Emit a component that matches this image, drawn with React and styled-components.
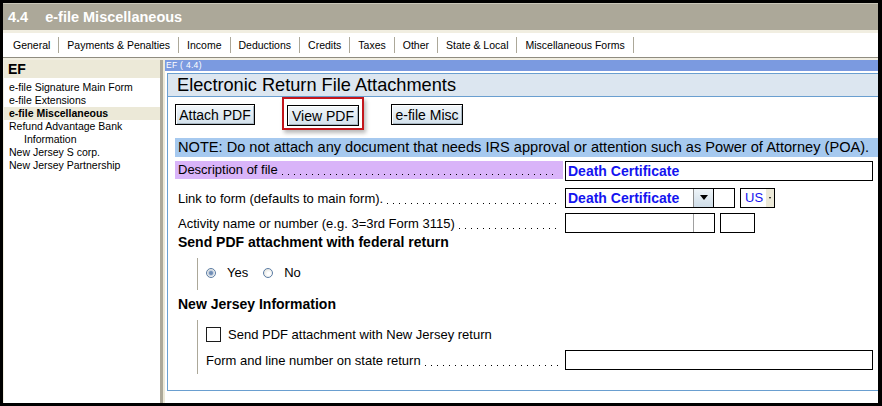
import React from 'react'
import styled, { createGlobalStyle } from 'styled-components'

const GlobalStyle = createGlobalStyle`
  html, body {
    margin: 0;
    padding: 0;
    background: #000;
  }
  body {
    font-family: "Liberation Sans", Arial, sans-serif;
    color: #000;
  }
  * {
    box-sizing: border-box;
  }
`

const Frame = styled.div`
  width: 882px;
  height: 406px;
  background: #000;
  padding: 3px 4px 3px 3px;
  display: flex;
  flex-direction: column;
`

const Window = styled.div`
  flex: 1;
  display: flex;
  flex-direction: column;
  background: #fff;
  overflow: hidden;
`

const TitleBar = styled.div`
  height: 27px;
  flex: none;
  background: #aca899;
  border-top: 1px solid #c9c6b8;
  color: #fff;
  font-weight: bold;
  font-size: 14.5px;
  display: flex;
  align-items: center;
  padding-left: 5px;
  gap: 17px;
`

const TabStrip = styled.div`
  flex: none;
  height: 28px;
  border-top: 3px solid #f1eee1;
  border-bottom: 1px solid #8f8c80;
  display: flex;
  align-items: center;
  padding: 0 0 1px 2px;
`

const Tab = styled.div`
  height: 16px;
  padding: 0 8px;
  border-right: 1px solid #aca899;
  font-size: 10.5px;
  display: flex;
  align-items: center;
  white-space: nowrap;
`

const Body = styled.div`
  flex: 1;
  display: flex;
  border-top: 2px solid #f1eee1;
  min-height: 0;
`

const Sidebar = styled.div`
  width: 160px;
  flex: none;
  background: #fff;
  border-left: 1px solid #f1eee1;
  border-right: 3px solid #aca899;
`

const SideHeader = styled.div`
  height: 18px;
  background: #ece9d8;
  font-weight: bold;
  font-size: 14px;
  padding-left: 4px;
  display: flex;
  align-items: center;
`

const SideList = styled.ul`
  list-style: none;
  margin: 0;
  padding: 3px 0 0;
`

const SideItem = styled.li`
  height: 13px;
  line-height: 13px;
  font-size: 10.5px;
  white-space: nowrap;
  padding-left: ${(p) => (p.$indent ? 20 : 5)}px;
  font-weight: ${(p) => (p.$active ? 'bold' : 'normal')};
  background: ${(p) => (p.$active ? '#ece9d8' : 'transparent')};
`

const Gutter = styled.div`
  width: 2px;
  flex: none;
  background: #ece9d8;
`

const Main = styled.div`
  flex: 1;
  display: flex;
  flex-direction: column;
  min-width: 0;
`

const FormBar = styled.div`
  height: 11px;
  background: #7b9ae0;
  color: #fff;
  font-size: 8.5px;
  line-height: 11px;
  padding-left: 1px;
  letter-spacing: 0.3px;
`

const Panel = styled.div`
  margin: 2px 0 0 2px;
  height: 318px;
  border: 1px solid #6a9fd0;
  border-right: none;
  display: flex;
  flex-direction: column;
`

const PanelTitle = styled.div`
  height: 23px;
  background: #dce6f0;
  border-bottom: 1px solid #6a9fd0;
  font-size: 18.2px;
  padding-left: 9px;
  display: flex;
  align-items: center;
`

const Content = styled.div`
  padding-left: 7px;
  display: flex;
  flex-direction: column;
`

const ButtonRow = styled.div`
  height: 33px;
  display: flex;
  align-items: flex-start;
  gap: 27px;
  margin-bottom: 8px;
`

const Button = styled.button`
  width: ${(p) => p.$w}px;
  height: 21px;
  padding: 0;
  margin-top: ${(p) => (p.$inset ? 0 : 7)}px;
  font-family: "Liberation Sans", Arial, sans-serif;
  font-size: 14px;
  color: #000;
  border: 1px solid #000;
  box-shadow: inset 1px 1px 0 #fff, inset -1px -1px 0 #a9b8c4;
  background: linear-gradient(#f3f7fa, #d3e1ec);
  cursor: default;
`

const Highlight = styled.div`
  border: 2px solid #c3161c;
  padding: 6px 3px 2px;
  box-shadow: 2px 3px 4px rgba(0, 0, 0, 0.28);
  display: flex;
`

const Note = styled.div`
  height: 19px;
  background: #a6c9ef;
  font-size: 14.6px;
  line-height: 19px;
  padding-left: 3px;
  white-space: nowrap;
  overflow: hidden;
`

const FieldRow = styled.div`
  display: grid;
  grid-template-columns: ${(p) => p.$label}px 308px;
  column-gap: 2px;
  align-items: ${(p) => (p.$top ? 'start' : 'center')};
  height: ${(p) => p.$h || 21}px;
  margin-top: ${(p) => p.$mt || 0}px;
`

const Label = styled.div`
  display: flex;
  align-items: flex-end;
  height: 18px;
  padding: 0 5px 2px 3px;
  font-size: 13px;
  line-height: 14px;
  white-space: nowrap;
  background: ${(p) => p.$bg || 'transparent'};
  padding-left: ${(p) => (p.$flush ? 0 : 3)}px;
  margin-top: ${(p) => p.$shift || 0}px;
`

const Leader = styled.span`
  flex: 1;
  align-self: stretch;
  margin-left: 4px;
  background-image: linear-gradient(to right, #000 1px, transparent 1px);
  background-size: 6px 1px;
  background-repeat: repeat-x;
  background-position: left bottom 2px;
`

const Fields = styled.div`
  display: flex;
  align-items: stretch;
  height: 20px;
`

const Box = styled.div`
  width: ${(p) => (p.$w ? `${p.$w}px` : '100%')};
  height: 20px;
  border: 1px solid #000;
  margin-left: ${(p) => p.$ml || 0}px;
  background: #fff;
  display: flex;
  align-items: center;
  justify-content: ${(p) => (p.$end ? 'flex-end' : 'flex-start')};
  overflow: hidden;
`

const Value = styled.span`
  flex: 1;
  padding-left: ${(p) => (p.$pad ? p.$pad : 2)}px;
  color: #1414f0;
  font-size: ${(p) => (p.$bold ? 14 : 13)}px;
  font-weight: ${(p) => (p.$bold ? 'bold' : 'normal')};
  white-space: nowrap;
`

const DropButton = styled.div`
  width: 20px;
  align-self: stretch;
  border-left: 1px solid #8c8c8c;
  background: linear-gradient(#eef4f8, #cfdde8);
  display: flex;
  align-items: center;
  justify-content: center;

  &::after {
    content: '';
    border-left: 4px solid transparent;
    border-right: 4px solid transparent;
    border-top: 5px solid #000;
  }
`

const MiniDrop = styled.div`
  width: 8px;
  align-self: stretch;
  background: #ece9d8;
  display: flex;
  align-items: center;
  justify-content: center;

  &::after {
    content: '';
    border-left: 1.5px solid transparent;
    border-right: 1.5px solid transparent;
    border-top: 2px solid #000;
  }
`

const Split = styled.div`
  width: 21px;
  align-self: stretch;
  border-left: 1px solid #a0a0a0;
`

const SectionTitle = styled.div`
  margin: ${(p) => p.$mt || 2}px 0 0 3px;
  font-size: 14px;
  font-weight: bold;
  line-height: 14px;
`

const Group = styled.div`
  margin: ${(p) => p.$mt}px 0 0 22px;
  border-left: 1px solid #aca899;
  height: ${(p) => p.$h}px;
  padding: ${(p) => p.$pt}px 0 0 8px;
  display: flex;
  flex-direction: column;
`

const OptionRow = styled.div`
  display: flex;
  align-items: center;
  font-size: 13px;
  height: 15px;
`

const Radio = styled.span`
  width: 10px;
  height: 10px;
  border-radius: 50%;
  border: 1px solid #5b7ca4;
  background: radial-gradient(circle at 60% 60%, #ffffff 20%, #dcdcd4 100%);
  display: flex;
  align-items: center;
  justify-content: center;
  margin-right: 11px;

  &::after {
    content: '';
    width: 4px;
    height: 4px;
    border-radius: 50%;
    background: ${(p) => (p.$checked ? '#6f8db6' : 'transparent')};
    box-shadow: ${(p) => (p.$checked ? '0 0 1px 1px #b9c8dc' : 'none')};
  }
`

const OptionText = styled.span`
  margin-right: ${(p) => p.$mr || 0}px;
`

const Check = styled.span`
  width: 15px;
  height: 15px;
  border: 1px solid #1c1c1c;
  background: #fff;
  margin-right: 7px;
`

const tabs = [
  'General',
  'Payments & Penalties',
  'Income',
  'Deductions',
  'Credits',
  'Taxes',
  'Other',
  'State & Local',
  'Miscellaneous Forms',
]

const sideItems = [
  { label: 'e-file Signature Main Form' },
  { label: 'e-file Extensions' },
  { label: 'e-file Miscellaneous', active: true },
  { label: 'Refund Advantage Bank' },
  { label: 'Information', indent: true },
  { label: 'New Jersey S corp.' },
  { label: 'New Jersey Partnership' },
]

const App = () => (
  <Frame>
    <GlobalStyle />
    <Window>
      <TitleBar>
        <span>4.4</span>
        <span>e-file Miscellaneous</span>
      </TitleBar>
      <TabStrip>
        {tabs.map((t) => (
          <Tab key={t}>{t}</Tab>
        ))}
      </TabStrip>
      <Body>
        <Sidebar>
          <SideHeader>EF</SideHeader>
          <SideList>
            {sideItems.map((item) => (
              <SideItem key={item.label} $active={item.active} $indent={item.indent}>
                {item.label}
              </SideItem>
            ))}
          </SideList>
        </Sidebar>
        <Gutter />
        <Main>
          <FormBar>EF ( 4.4)</FormBar>
          <Panel>
            <PanelTitle>Electronic Return File Attachments</PanelTitle>
            <Content>
              <ButtonRow>
                <Button $w={80}>Attach PDF</Button>
                <Highlight>
                  <Button $w={72} $inset>View PDF</Button>
                </Highlight>
                <Button $w={72}>e-file Misc</Button>
              </ButtonRow>

              <Note>
                NOTE: Do not attach any document that needs IRS approval or attention such as Power of Attorney (POA).
              </Note>

              <FieldRow $label={388} $mt={4} $top>
                <Label $bg='#d9b4f9'>
                  Description of file<Leader />
                </Label>
                <Box>
                  <Value $bold>Death Certificate</Value>
                </Box>
              </FieldRow>

              <FieldRow $label={388} $mt={5}>
                <Label $shift={2}>
                  Link to form (defaults to main form).<Leader />
                </Label>
                <Fields>
                  <Box $w={149}>
                    <Value $bold>Death Certificate</Value>
                    <DropButton />
                  </Box>
                  <Box $w={22} $ml={-1} />
                  <Box $w={35} $ml={5}>
                    <Value $pad={4}>US</Value>
                    <MiniDrop />
                  </Box>
                </Fields>
              </FieldRow>

              <FieldRow $label={388} $mt={4}>
                <Label $shift={2}>
                  Activity name or number (e.g. 3=3rd Form 3115)<Leader />
                </Label>
                <Fields>
                  <Box $w={150} $end>
                    <Split />
                  </Box>
                  <Box $w={35} $ml={5} />
                </Fields>
              </FieldRow>

              <SectionTitle>Send PDF attachment with federal return</SectionTitle>
              <Group $mt={9} $h={32} $pt={7}>
                <OptionRow>
                  <Radio $checked />
                  <OptionText $mr={15}>Yes</OptionText>
                  <Radio />
                  <OptionText>No</OptionText>
                </OptionRow>
              </Group>

              <SectionTitle $mt={7}>New Jersey Information</SectionTitle>
              <Group $mt={9} $h={54} $pt={7}>
                <OptionRow>
                  <Check />
                  <OptionText>Send PDF attachment with New Jersey return</OptionText>
                </OptionRow>
                <FieldRow $label={357} $mt={8} $h={20}>
                  <Label $flush $shift={1}>
                    Form and line number on state return<Leader />
                  </Label>
                  <Box />
                </FieldRow>
              </Group>
            </Content>
          </Panel>
        </Main>
      </Body>
    </Window>
  </Frame>
)

export default App
